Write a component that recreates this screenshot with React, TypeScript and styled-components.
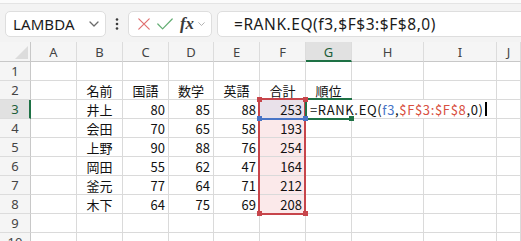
import React from "react";
import styled, { createGlobalStyle } from "styled-components";

const GlobalStyle = createGlobalStyle`
  html, body { margin: 0; padding: 0; background: #ffffff; overflow: hidden; }
  body { font-family: "Noto Sans", "Noto Sans CJK JP", sans-serif; }
  * { box-sizing: border-box; }
`;

const UI_FONT = `"Noto Sans", "Noto Sans CJK JP", sans-serif`;
const CELL_FONT = `"Noto Sans CJK JP", "Noto Sans", sans-serif`;

const GREEN = "#1e7145";
const RED = "#c7454b";
const BLUE = "#4874c6";

const COLS = ["A", "B", "C", "D", "E", "F", "G", "H", "I", "J"];
const COL_W = [46, 46, 46, 45, 46, 46, 46, 72, 73];

type CellValue = string | number;
const DATA: Record<number, CellValue[]> = {
  2: ["", "名前", "国語", "数学", "英語", "合計", "順位"],
  3: ["", "井上", 80, 85, 88, 253],
  4: ["", "会田", 70, 65, 58, 193],
  5: ["", "上野", 90, 88, 76, 254],
  6: ["", "岡田", 55, 62, 47, 164],
  7: ["", "釜元", 77, 64, 71, 212],
  8: ["", "木下", 64, 75, 69, 208],
};

/* ---------- Toolbar ---------- */

const Window = styled.div`
  width: 521px;
  height: 241px;
  overflow: hidden;
  background: #fff;
`;

const Toolbar = styled.div`
  height: 42px;
  background: #f3f3f3;
  border-top: 3px solid #fbfbfb;
  box-shadow: inset 0 1px 0 #e4e4e4;
  display: flex;
  align-items: center;
  padding: 3px 0 0 5px;
`;

const Box = styled.div`
  height: 26px;
  background: #fff;
  border: 1px solid #dedede;
  border-radius: 5px;
  display: flex;
  align-items: center;
`;

const NameBox = styled(Box)`
  width: 101px;
  padding: 0 6px 0 7px;
  justify-content: space-between;
`;

const NameText = styled.span`
  font-family: ${UI_FONT};
  font-size: 15px;
  color: #1b1b1b;
  letter-spacing: 0.1px;
`;

const DotsSlot = styled.div`
  width: 22px;
  display: flex;
  justify-content: center;
`;

const ButtonsBox = styled(Box)`
  width: 84px;
  padding: 0 4px 0 6px;
`;

const IconSlot = styled.span<{ $w: number }>`
  width: ${(p) => p.$w}px;
  height: 24px;
  display: flex;
  align-items: center;
  justify-content: center;
`;

const FxText = styled.span`
  font-family: "Liberation Serif", "DejaVu Serif", serif;
  font-style: italic;
  font-weight: bold;
  font-size: 17px;
  color: #3a3a3a;
  line-height: 1;
  margin-top: -2px;
`;

const FormulaBox = styled(Box)`
  flex: 1;
  margin-left: 5px;
  margin-right: -8px;
  padding-left: 16px;
`;

const FormulaText = styled.span`
  font-family: ${UI_FONT};
  font-size: 15.5px;
  color: #1b1b1b;
  letter-spacing: 0.55px;
  white-space: nowrap;
`;

/* ---------- Sheet ---------- */

const Sheet = styled.div`
  position: relative;
`;

const Grid = styled.div`
  display: grid;
  grid-template-columns: 31px ${COL_W.map((w) => `${w}px`).join(" ")} 1fr;
  grid-template-rows: 20px;
  grid-auto-rows: 19px;
`;

const Corner = styled.div`
  position: relative;
  background: #f5f5f5;
  border-right: 1px solid #c8c8c8;
  border-bottom: 1px solid #c8c8c8;
`;

const CornerTriangle = styled.div`
  position: absolute;
  right: 2px;
  bottom: 2px;
  width: 0;
  height: 0;
  border-left: 13px solid transparent;
  border-bottom: 13px solid #dcdcdc;
`;

const ColHeader = styled.div<{ $active?: boolean }>`
  background: ${(p) => (p.$active ? "#e1e1e1" : "#f5f5f5")};
  border-right: 1px solid #dcdcdc;
  border-bottom: ${(p) => (p.$active ? `2px solid ${GREEN}` : "1px solid #c8c8c8")};
  display: flex;
  align-items: center;
  justify-content: center;
  font-family: ${UI_FONT};
  font-size: 13px;
  color: ${(p) => (p.$active ? "#1d5e3a" : "#444")};
  padding-top: ${(p) => (p.$active ? "1px" : "0")};
`;

const RowHeader = styled.div<{ $active?: boolean }>`
  background: ${(p) => (p.$active ? "#e1e1e1" : "#f5f5f5")};
  border-right: ${(p) => (p.$active ? `2px solid ${GREEN}` : "1px solid #c8c8c8")};
  border-bottom: 1px solid #dcdcdc;
  display: flex;
  align-items: center;
  justify-content: center;
  font-family: ${UI_FONT};
  font-size: 13px;
  color: ${(p) => (p.$active ? "#1d5e3a" : "#444")};
  padding-left: ${(p) => (p.$active ? "1px" : "0")};
`;

const Cell = styled.div<{ $align: "left" | "center" | "right"; $fill?: string }>`
  background: ${(p) => p.$fill || "#fff"};
  border-right: 1px solid #dadada;
  border-bottom: 1px solid #dadada;
  display: flex;
  align-items: center;
  justify-content: ${(p) =>
    p.$align === "right" ? "flex-end" : p.$align === "center" ? "center" : "flex-start"};
  padding: 0 3px;
  font-family: ${CELL_FONT};
  font-size: 13px;
  color: #111;
  white-space: nowrap;
  overflow: hidden;
`;

/* ---------- Overlays (reference frames over the grid) ---------- */

const Frame = styled.div<{ $x: number; $y: number; $w: number; $h: number; $color: string }>`
  position: absolute;
  left: ${(p) => p.$x}px;
  top: ${(p) => p.$y}px;
  width: ${(p) => p.$w}px;
  height: ${(p) => p.$h}px;
  border: 2px solid ${(p) => p.$color};
  pointer-events: none;
`;

const ActiveFrame = styled.div<{ $x: number; $y: number; $w: number; $h: number }>`
  position: absolute;
  left: ${(p) => p.$x}px;
  top: ${(p) => p.$y}px;
  width: ${(p) => p.$w}px;
  height: ${(p) => p.$h}px;
  border-top: 2px solid ${GREEN};
  border-left: 2px solid ${GREEN};
  border-bottom: 2px solid ${GREEN};
  pointer-events: none;
  z-index: 3;
`;

const Handle = styled.div<{ $x: number; $y: number; $color: string }>`
  position: absolute;
  left: ${(p) => p.$x - 2}px;
  top: ${(p) => p.$y - 2}px;
  width: 5px;
  height: 5px;
  background: ${(p) => p.$color};
  z-index: 4;
`;

const Editor = styled.div<{ $x: number; $y: number; $w: number; $h: number }>`
  position: absolute;
  left: ${(p) => p.$x}px;
  top: ${(p) => p.$y}px;
  width: ${(p) => p.$w}px;
  height: ${(p) => p.$h}px;
  background: #fff;
  display: flex;
  align-items: center;
  padding-left: 3px;
  font-family: ${CELL_FONT};
  font-size: 13px;
  color: #111;
  white-space: nowrap;
  letter-spacing: 0.65px;
  z-index: 2;
`;

const Ref = styled.span<{ $color: string }>`
  color: ${(p) => p.$color};
`;

const Caret = styled.span`
  display: inline-block;
  width: 2px;
  height: 14px;
  background: #000;
  margin-left: 1px;
`;

/* ---------- Icons ---------- */

const ChevronDown = ({ size = 10, color = "#666", sw = 1.3 }: { size?: number; color?: string; sw?: number }) => (
  <svg width={size} height={size * 0.6} viewBox="0 0 10 6" fill="none">
    <path d="M1 1 L5 5 L9 1" stroke={color} strokeWidth={sw} strokeLinecap="round" strokeLinejoin="round" />
  </svg>
);

const VDots = () => (
  <svg width="4" height="12" viewBox="0 0 4 12">
    <circle cx="2" cy="1.5" r="1.3" fill="#3b3b3b" />
    <circle cx="2" cy="6" r="1.3" fill="#3b3b3b" />
    <circle cx="2" cy="10.5" r="1.3" fill="#3b3b3b" />
  </svg>
);

const CrossIcon = () => (
  <svg width="12" height="12" viewBox="0 0 12 12" fill="none">
    <path d="M0.8 0.8 L11.2 11.2 M11.2 0.8 L0.8 11.2" stroke="#e07070" strokeWidth="1.2" strokeLinecap="round" />
  </svg>
);

const CheckIcon = () => (
  <svg width="16" height="12" viewBox="0 0 16 12" fill="none">
    <path d="M0.8 6 L5.6 10.8 L15.2 1" stroke="#62ad72" strokeWidth="1.2" strokeLinecap="round" strokeLinejoin="round" />
  </svg>
);

/* ---------- Geometry (page coords, sheet top = 42) ---------- */

const SHEET_TOP = 42;
const colLeft = (i: number) => 31 + COL_W.slice(0, i).reduce((a, b) => a + b, 0);
const F_X = colLeft(5) - 1;
const G_X = colLeft(6) - 1;
const H_X = colLeft(7) - 1;
const ROW_LINE = (r: number) => 61 + 19 * (r - 1) - SHEET_TOP + 19;

export default function App() {
  const top3 = ROW_LINE(2) - 1;
  const bot3 = ROW_LINE(3);
  const bot8 = ROW_LINE(8);

  const rows = Array.from({ length: 10 }, (_, i) => i + 1);

  return (
    <Window>
      <GlobalStyle />
      <Toolbar>
        <NameBox>
          <NameText>LAMBDA</NameText>
          <ChevronDown size={10} color="#6b6b6b" sw={1.3} />
        </NameBox>
        <DotsSlot>
          <VDots />
        </DotsSlot>
        <ButtonsBox>
          <IconSlot $w={18}>
            <CrossIcon />
          </IconSlot>
          <IconSlot $w={24}>
            <CheckIcon />
          </IconSlot>
          <IconSlot $w={20}>
            <FxText>fx</FxText>
          </IconSlot>
          <IconSlot $w={9}>
            <ChevronDown size={7} color="#9a9a9a" sw={1.1} />
          </IconSlot>
        </ButtonsBox>
        <FormulaBox>
          <FormulaText>=RANK.EQ(f3,$F$3:$F$8,0)</FormulaText>
        </FormulaBox>
      </Toolbar>

      <Sheet>
        <Grid>
          <Corner>
            <CornerTriangle />
          </Corner>
          {COLS.map((c) => (
            <ColHeader key={c} $active={c === "G"}>
              {c}
            </ColHeader>
          ))}
          {rows.map((r) => (
            <React.Fragment key={r}>
              <RowHeader $active={r === 3}>{r}</RowHeader>
              {COLS.map((c, ci) => {
                const v = DATA[r]?.[ci];
                const isNum = typeof v === "number";
                let fill: string | undefined;
                if (c === "F" && r === 3) fill = "#e9e1ea";
                else if (c === "F" && r >= 4 && r <= 8) fill = "#fbe9ea";
                return (
                  <Cell key={c} $align={isNum ? "right" : "center"} $fill={fill}>
                    {v === undefined ? "" : v}
                  </Cell>
                );
              })}
            </React.Fragment>
          ))}
        </Grid>

        <Frame $x={F_X - 1} $y={top3} $w={G_X - F_X + 2} $h={bot3 - top3 + 2} $color={BLUE} />
        <Frame $x={F_X - 1} $y={top3} $w={G_X - F_X + 2} $h={bot8 - top3 + 2} $color={RED} />
        <Handle $x={F_X} $y={top3 + 1} $color={RED} />
        <Handle $x={G_X} $y={top3 + 1} $color={RED} />
        <Handle $x={F_X} $y={bot8} $color={RED} />
        <Handle $x={G_X} $y={bot8} $color={RED} />
        <Handle $x={F_X} $y={bot3} $color={BLUE} />
        <Handle $x={G_X} $y={bot3} $color={BLUE} />

        <Editor $x={G_X + 2} $y={top3 + 2} $w={186} $h={bot3 - top3 - 2}>
          =RANK.EQ(<Ref $color={BLUE}>f3</Ref>,<Ref $color="#d8503f">$F$3:$F$8</Ref>,0)
          <Caret />
        </Editor>
        <ActiveFrame $x={G_X} $y={top3} $w={H_X - G_X + 1} $h={bot3 - top3 + 2} />
        <Handle $x={H_X} $y={bot3} $color={GREEN} />
      </Sheet>
    </Window>
  );
}
